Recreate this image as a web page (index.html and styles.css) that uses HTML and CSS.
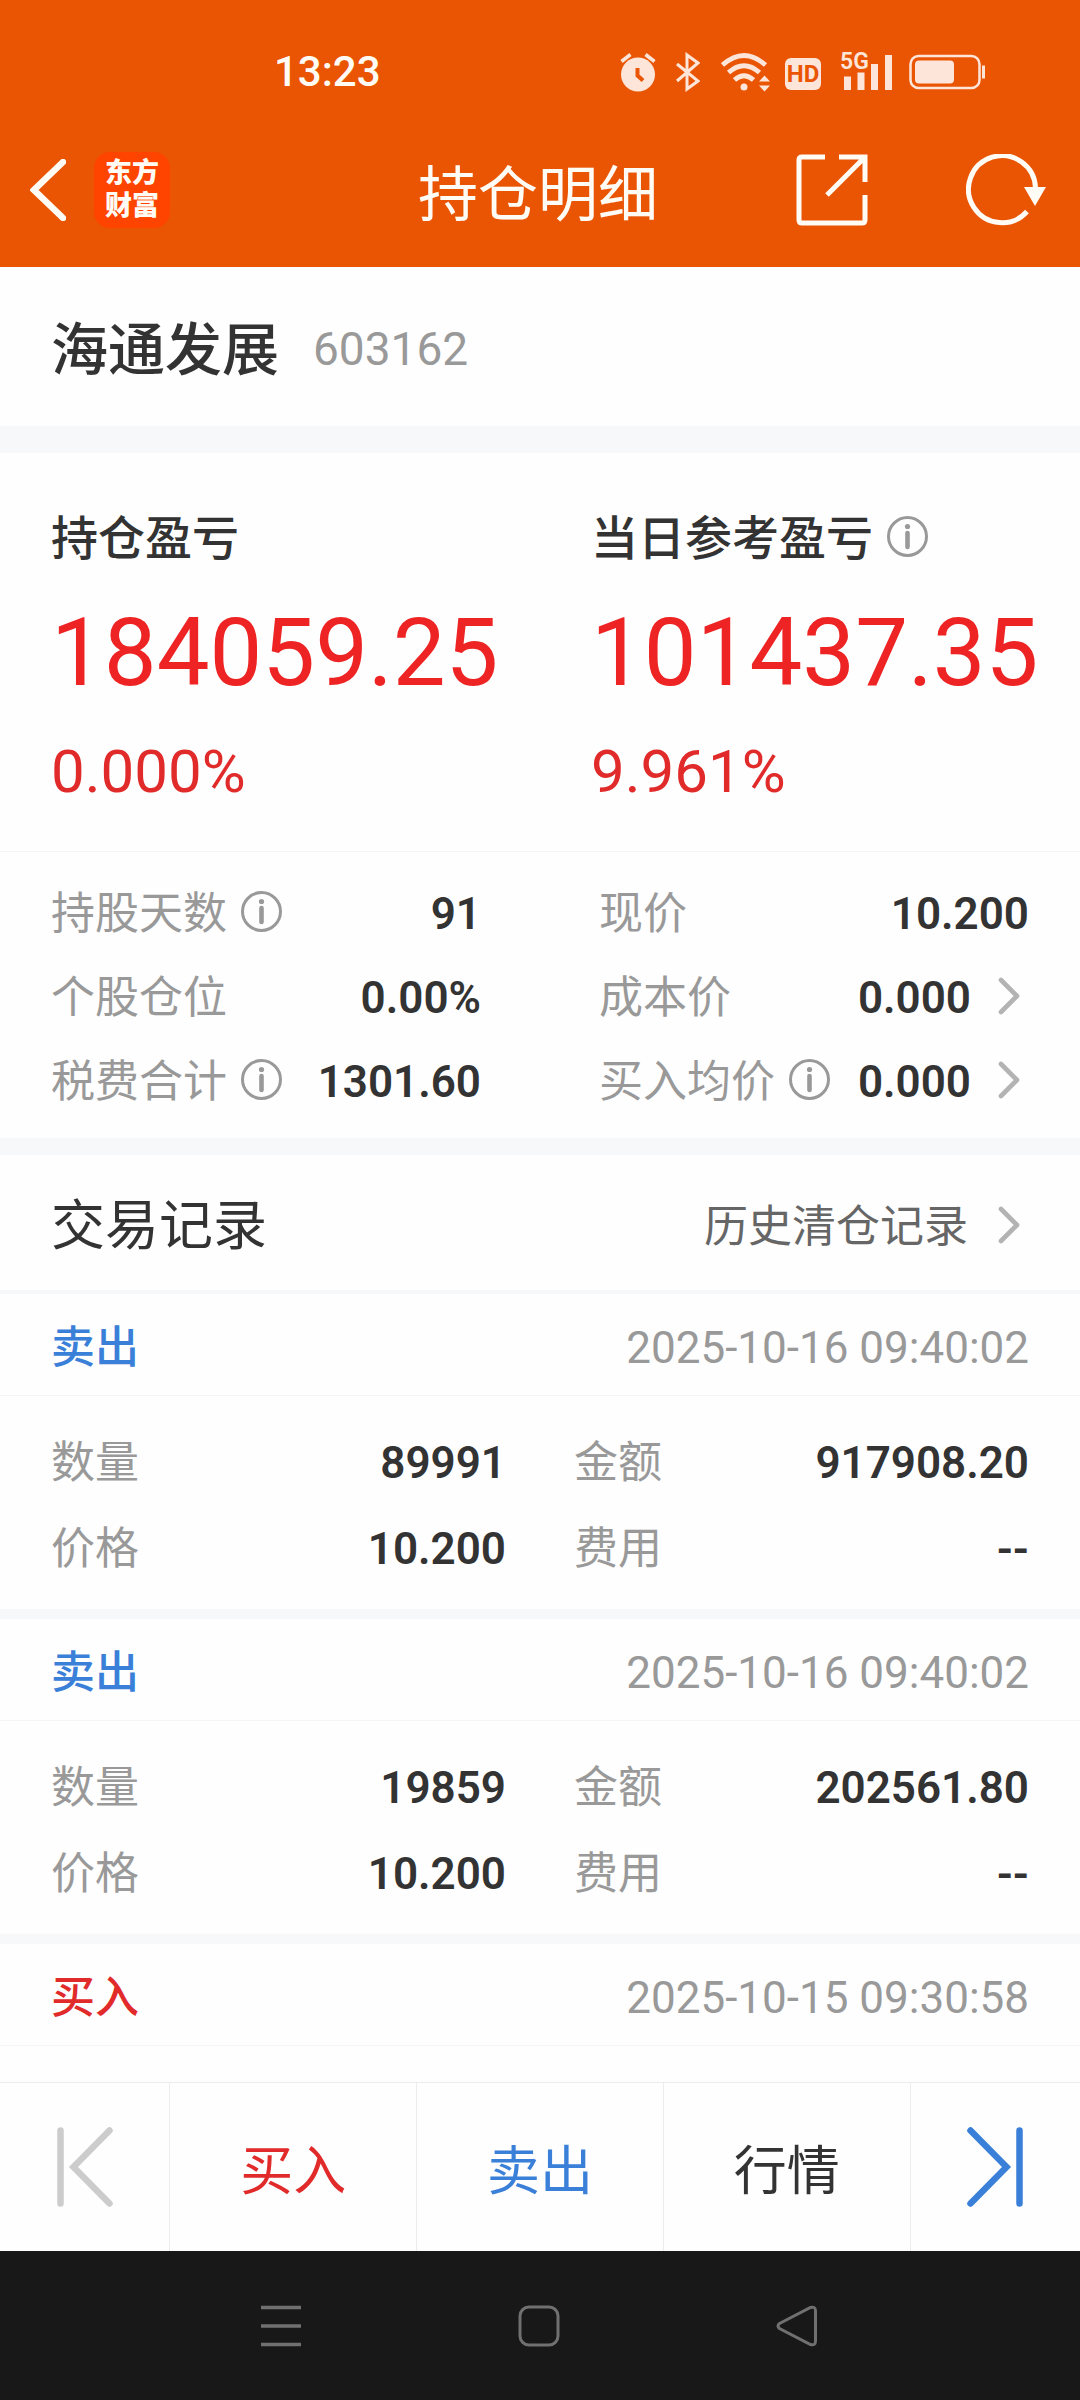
FILE: index.html
```html
<!DOCTYPE html>
<html lang="zh-CN">
<head>
<meta charset="utf-8">
<meta name="viewport" content="width=device-width, initial-scale=1">
<title>持仓明细</title>
<link rel="stylesheet" href="styles.css">
</head>
<body>
<svg class="sprite" aria-hidden="true">
  <symbol id="info" viewBox="0 0 41 41">
    <circle cx="20.5" cy="20.5" r="19" fill="none" stroke="currentColor" stroke-width="3"/>
    <circle cx="20.5" cy="10.5" r="2.6" fill="currentColor"/>
    <path d="M20.500 17V31" fill="none" stroke="currentColor" stroke-width="4.600" stroke-linecap="round"/>
  </symbol>
  <symbol id="chevron" viewBox="0 0 22 38">
    <path d="M3 3L19 19L3 35" fill="none" stroke="currentColor" stroke-width="4.600" stroke-linecap="round" stroke-linejoin="round"/>
  </symbol>
</svg>

<header class="topbar">
  <div class="status">
    <time class="clock">13:23</time>
    <div class="status-icons">
      <svg class="i-alarm" viewBox="0 0 36 40" aria-label="闹钟">
        <circle cx="18" cy="22.500" r="17" fill="currentColor"/>
        <path d="M1.500 9.500L10.500 2.500M34.500 9.500L25.500 2.500" stroke="currentColor" stroke-width="3.500"/>
        <path d="M17.500 16V23.500L23 28.500" fill="none" stroke="#ea5504" stroke-width="4"/>
      </svg>
      <svg class="i-bt" viewBox="0 0 24 40" aria-label="蓝牙">
        <path d="M1 12L22 29L11 37V3L22 11L1 29" fill="none" stroke="currentColor" stroke-width="3"/>
      </svg>
      <svg class="i-wifi" viewBox="0 0 50 40" aria-label="无线网络">
        <g fill="none" stroke="currentColor" stroke-width="4.800">
          <path d="M1.500 13Q23 -6 44.500 13"/>
          <path d="M7.500 20.500Q23 7 38.500 20.500"/>
          <path d="M13.500 28Q23 19.500 32.500 28"/>
        </g>
        <circle cx="23" cy="35" r="3.500" fill="currentColor"/>
        <path d="M38 29.500L43.500 23.500L49 29.500ZM38 33.500L43.500 39.500L49 33.500Z" fill="currentColor"/>
      </svg>
      <span class="hd">HD</span>
      <span class="cell">
        <span class="cell-tag">5G</span>
        <svg class="i-cell" viewBox="0 0 52 38" aria-label="信号">
          <path d="M4 23.500h7v13.500h-7zM17.500 19.500h7v17.500h-7zM31 11h7v26h-7zM45 2h7v35h-7z" fill="currentColor"/>
        </svg>
      </span>
      <svg class="i-battery" viewBox="0 0 76 38" aria-label="电池">
        <rect x="1.500" y="3" width="69" height="32" rx="8" fill="none" stroke="currentColor" stroke-width="2.500"/>
        <rect x="6" y="7.500" width="39" height="23" rx="4" fill="currentColor"/>
        <rect x="73" y="12.500" width="3" height="13" fill="currentColor"/>
      </svg>
    </div>
  </div>
  <div class="nav">
    <div class="nav-left">
      <button class="icon-btn" type="button" aria-label="返回">
        <svg class="i-back" viewBox="0 0 36 62"><path d="M33 3L4 31L33 59" fill="none" stroke="currentColor" stroke-width="6.500" stroke-linecap="round" stroke-linejoin="miter"/></svg>
      </button>
      <span class="logo">东方<br>财富</span>
    </div>
    <h1 class="title">持仓明细</h1>
    <div class="nav-right">
      <button class="icon-btn" type="button" aria-label="分享">
        <svg class="i-share" viewBox="0 0 72 72"><path d="M29 3H6Q3 3 3 6V66Q3 69 6 69H66Q69 69 69 66V41M43 3H69V28M31 41L68 4" fill="none" stroke="currentColor" stroke-width="5"/></svg>
      </button>
      <button class="icon-btn" type="button" aria-label="刷新">
        <svg class="i-refresh" viewBox="0 0 80 72"><path d="M61 57.500A33.500 33.500 0 1 1 69.500 34" fill="none" stroke="currentColor" stroke-width="5"/><path d="M58 33H80L69 52Z" fill="currentColor"/></svg>
      </button>
    </div>
  </div>
</header>

<main class="content">
  <section class="stock">
    <h2 class="stock-name">海通发展</h2>
    <span class="stock-code">603162</span>
  </section>

  <section class="profit">
    <div class="profit-item">
      <h3 class="profit-label">持仓盈亏</h3>
      <p class="profit-value">184059.25</p>
      <p class="profit-rate">0.000%</p>
    </div>
    <div class="profit-item">
      <h3 class="profit-label">当日参考盈亏<svg class="i-info"><use href="#info"/></svg></h3>
      <p class="profit-value">101437.35</p>
      <p class="profit-rate">9.961%</p>
    </div>
  </section>

  <dl class="stats">
    <div class="stat"><dt>持股天数<svg class="i-info"><use href="#info"/></svg></dt><dd>91</dd></div>
    <div class="stat"><dt>现价</dt><dd>10.200</dd></div>
    <div class="stat"><dt>个股仓位</dt><dd>0.00%</dd></div>
    <div class="stat"><dt>成本价</dt><dd>0.000<svg class="i-chevron"><use href="#chevron"/></svg></dd></div>
    <div class="stat"><dt>税费合计<svg class="i-info"><use href="#info"/></svg></dt><dd>1301.60</dd></div>
    <div class="stat"><dt>买入均价<svg class="i-info"><use href="#info"/></svg></dt><dd>0.000<svg class="i-chevron"><use href="#chevron"/></svg></dd></div>
  </dl>

  <section class="records">
    <div class="records-head">
      <h2 class="records-title">交易记录</h2>
      <a class="history" href="#">历史清仓记录<svg class="i-chevron"><use href="#chevron"/></svg></a>
    </div>

    <article class="record">
      <div class="record-head"><h3 class="side sell">卖出</h3><time>2025-10-16 09:40:02</time></div>
      <dl class="record-body">
        <div class="stat"><dt>数量</dt><dd>89991</dd></div>
        <div class="stat"><dt>金额</dt><dd>917908.20</dd></div>
        <div class="stat"><dt>价格</dt><dd>10.200</dd></div>
        <div class="stat"><dt>费用</dt><dd>--</dd></div>
      </dl>
    </article>

    <article class="record">
      <div class="record-head"><h3 class="side sell">卖出</h3><time>2025-10-16 09:40:02</time></div>
      <dl class="record-body">
        <div class="stat"><dt>数量</dt><dd>19859</dd></div>
        <div class="stat"><dt>金额</dt><dd>202561.80</dd></div>
        <div class="stat"><dt>价格</dt><dd>10.200</dd></div>
        <div class="stat"><dt>费用</dt><dd>--</dd></div>
      </dl>
    </article>

    <article class="record">
      <div class="record-head"><h3 class="side buy">买入</h3><time>2025-10-15 09:30:58</time></div>
    </article>
  </section>
</main>

<footer class="tabs">
  <button class="tab tab-end prev" type="button" aria-label="上一只">
    <svg class="i-skip" viewBox="0 0 56 80"><path d="M3.500 3.500V76.500M52.500 3.500L16.500 40L52.500 76.500" fill="none" stroke="currentColor" stroke-width="6.500" stroke-linecap="round"/></svg>
  </button>
  <button class="tab tab-text buy" type="button">买入</button>
  <button class="tab tab-text sell" type="button">卖出</button>
  <button class="tab tab-text" type="button">行情</button>
  <button class="tab tab-end sell" type="button" aria-label="下一只">
    <svg class="i-skip" viewBox="0 0 56 80"><path d="M52.500 3.500V76.500M3.500 3.500L39.500 40L3.500 76.500" fill="none" stroke="currentColor" stroke-width="6.500" stroke-linecap="round"/></svg>
  </button>
</footer>

<nav class="sysnav">
  <button class="icon-btn" type="button" aria-label="菜单"><svg class="i-sys" viewBox="0 0 42 42"><path d="M1 2.500H41M1 21H41M1 39.500H41" stroke="currentColor" stroke-width="3.500"/></svg></button>
  <button class="icon-btn" type="button" aria-label="主屏幕"><svg class="i-sys" viewBox="0 0 42 42"><rect x="2" y="2" width="38" height="38" rx="9" fill="none" stroke="currentColor" stroke-width="3"/></svg></button>
  <button class="icon-btn" type="button" aria-label="后退"><svg class="i-sys" viewBox="0 0 42 42"><path d="M3.500 18.500L34.500 2.500Q39.500 1 39.500 6V36Q39.500 41 34.500 39.500L3.500 23.500Q0.500 21 3.500 18.500Z" fill="none" stroke="currentColor" stroke-width="3"/></svg></button>
</nav>
</body>
</html>
```

FILE: styles.css
```css
* {
  box-sizing: border-box;
}

body {
  margin: 0;
  min-height: 100vh;
  display: flex;
  flex-direction: column;
  background: #fefefe;
  color: #333;
  font-family: Roboto, "Noto Sans CJK SC", sans-serif;
  font-size: 44px;
  line-height: 52px;
}

h1, h2, h3, p, dl, dd {
  margin: 0;
}

svg {
  display: block;
  flex: none;
}

button {
  padding: 0;
  border: 0;
  background: none;
  color: inherit;
  font: inherit;
}

.sprite {
  position: absolute;
  width: 0;
  height: 0;
}

/* Status bar and title bar */
.topbar {
  padding: 48px 34px 39px 30px;
  background: #ea5504;
  color: #fffcf5;
}

.status {
  display: flex;
  justify-content: space-between;
  align-items: center;
  height: 48px;
  margin-bottom: 56px;
  padding: 0 61px 0 244px;
}

.clock {
  font-size: 42px;
  font-weight: 500;
}

.status-icons {
  display: flex;
  align-items: center;
  color: #fde6d9;
}

.i-alarm { width: 36px; height: 40px; margin-right: 20px; }
.i-bt { width: 24px; height: 40px; margin-right: 21px; }
.i-wifi { width: 50px; height: 40px; margin-right: 14px; }

.hd {
  width: 36px;
  height: 32px;
  margin: 4px 19px 0 0;
  border-radius: 6px;
  background: #fde6d9;
  color: #ea5504;
  font-size: 24px;
  font-weight: 700;
  line-height: 33px;
  text-align: center;
}

.cell {
  position: relative;
  margin-right: 17px;
}

.cell-tag {
  position: absolute;
  top: -2px;
  left: 0;
  font-size: 23px;
  font-weight: 600;
  line-height: 22px;
}

.i-cell { width: 52px; height: 38px; }
.i-battery { width: 76px; height: 38px; }

.nav {
  display: grid;
  grid-template-columns: 1fr auto 1fr;
  align-items: center;
}

.nav-left {
  display: flex;
  align-items: center;
  gap: 28px;
}

.nav-right {
  display: flex;
  justify-content: flex-end;
  align-items: center;
  gap: 98px;
}

.i-back { width: 36px; height: 62px; }
.i-share { width: 72px; height: 72px; }
.i-refresh { width: 80px; height: 72px; }

.logo {
  width: 76px;
  height: 76px;
  padding-top: 5px;
  border-radius: 16px;
  background: #ff4400;
  font-size: 27px;
  font-weight: 900;
  line-height: 33px;
  text-align: center;
}

.title {
  padding-top: 12px;
  font-size: 60px;
  font-weight: 400;
  line-height: 64px;
}

/* Stock heading */
.content {
  flex: 1;
}

.stock {
  display: flex;
  align-items: center;
  gap: 34px;
  padding: 48px 51px 39px;
}

.stock-name {
  font-size: 57px;
  font-weight: 500;
  line-height: 72px;
}

.stock-code {
  padding-bottom: 4px;
  color: #999;
  font-size: 46px;
}

/* Profit summary */
.profit {
  display: grid;
  grid-template-columns: 1fr 1fr;
  padding: 60px 0 44px;
  border-top: 27px solid #f6f8fa;
  border-bottom: 1px solid #f5f5f6;
}

.profit-item {
  padding-left: 51px;
}

.profit-label {
  display: flex;
  align-items: center;
  gap: 14px;
  font-size: 47px;
  font-weight: 500;
}

.profit-value {
  margin-top: 32px;
  color: #ee2424;
  font-size: 94px;
  line-height: 112px;
}

.profit-rate {
  margin-top: 28px;
  color: #e12b2b;
  font-size: 60px;
  line-height: 70px;
}

.i-info {
  width: 41px;
  height: 41px;
  margin-bottom: 6px;
  color: #999;
}

/* Label and value pairs */
.stats {
  display: grid;
  grid-template-columns: 1fr 1fr;
  gap: 32px 118px;
  padding: 36px 51px 30px;
  border-bottom: 17px solid #f6f8fa;
}

.stat {
  display: flex;
  justify-content: space-between;
  align-items: center;
}

.stat dt {
  display: flex;
  align-items: center;
  gap: 14px;
  color: #999;
}

.stat dd {
  display: flex;
  align-items: center;
  gap: 27px;
  font-weight: 600;
}

.i-chevron {
  width: 22px;
  height: 38px;
  margin: 0 9px 5px 0;
  color: #b3b3b3;
}

/* Trade records */
.records-head {
  display: flex;
  justify-content: space-between;
  align-items: center;
  padding: 38px 51px 29px;
  border-bottom: 4px solid #f6f8fa;
}

.records-title {
  font-size: 54px;
  font-weight: 400;
  line-height: 68px;
}

.history {
  display: flex;
  align-items: center;
  gap: 30px;
  color: #666;
  text-decoration: none;
}

.record + .record {
  border-top: 10px solid #f6f8fa;
}

.record-head {
  display: flex;
  justify-content: space-between;
  align-items: center;
  padding: 28px 51px 21px;
  border-bottom: 1px solid #f5f5f6;
  color: #999;
}

.side {
  font-size: 44px;
  font-weight: 500;
}

.record-body {
  display: grid;
  grid-template-columns: 1fr 1fr;
  gap: 34px 68px;
  padding: 41px 51px 34px;
}

.buy { color: #e12b2b; }
.sell { color: #3a80d8; }

/* Bottom actions */
.tabs {
  display: flex;
  border-top: 1px solid #ececec;
}

.tab {
  flex: 247;
  height: 168px;
}

.tab-text {
  padding-top: 10px;
  font-size: 53px;
}

.tab + .tab {
  border-left: 1px solid #ececec;
}

.tab-end {
  display: flex;
  flex: 170;
  justify-content: center;
  align-items: center;
}

.prev { color: #ccc; }
.i-skip { width: 56px; height: 80px; }

.sysnav {
  display: flex;
  justify-content: center;
  gap: 216px;
  padding: 54px 3px 53px 0;
  background: #181818;
  color: #707070;
}

.i-sys { width: 42px; height: 42px; }
```
